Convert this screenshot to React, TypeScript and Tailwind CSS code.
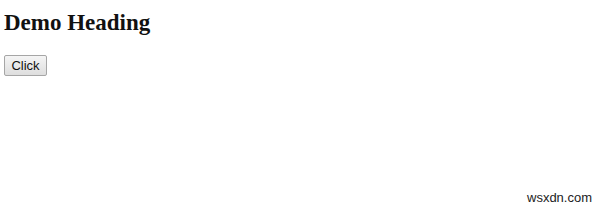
export default function App() {
  return (
    <main className="relative w-[600px] h-[207px] bg-white overflow-hidden">
      {/* Heading and button, plain browser-default look */}
      <div className="pl-[4px] pt-[10px]">
        <h2 className="text-[23px] leading-[26px] font-bold text-[#111] font-['Liberation_Serif',serif]">
          Demo Heading
        </h2>
        <button className="mt-[19px] h-[21px] w-[43px] rounded-[2px] border border-[#a6a6a6] bg-gradient-to-b from-[#f5f5f5] to-[#dedede] text-[13px] leading-[18px] text-[#111] font-['Liberation_Sans',sans-serif]">
          Click
        </button>
      </div>

      {/* Watermark */}
      <span className="absolute left-[527px] top-[188px] text-[13px] text-[#222] font-['Liberation_Sans',sans-serif]">
        wsxdn.com
      </span>
    </main>
  );
}
